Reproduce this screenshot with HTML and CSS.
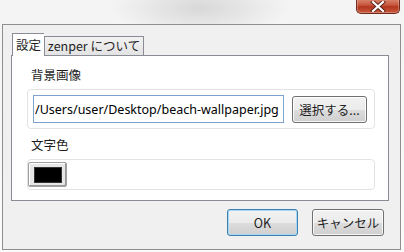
FILE: index.html
```html
<!DOCTYPE html>
<html lang="ja">
<head>
  <meta charset="UTF-8">
  <title>zenper 設定</title>
  <link rel="stylesheet" href="styles.css">
</head>
<body>

<div class="titlebar">
  <div class="close-btn">
    <svg width="16" height="11" viewBox="0 0 16 11">
      <path d="M3 1 L13 10 M13 1 L3 10" stroke="#5a2418" stroke-width="4" stroke-linecap="square"/>
      <path d="M3 1 L13 10 M13 1 L3 10" stroke="#fff" stroke-width="2.2" stroke-linecap="square"/>
    </svg>
  </div>
</div>

<div class="window">
  <div class="tabs">
    <div class="tab active">設定</div>
    <div class="tab about">zenper について</div>
  </div>

  <div class="panel">
    <div class="label">背景画像</div>
    <div class="group">
      <input type="text" class="path" value="/Users/user/Desktop/beach-wallpaper.jpg">
      <button class="btn browse">選択する...</button>
    </div>

    <div class="label">文字色</div>
    <div class="group color-group">
      <button class="swatch"><span></span></button>
    </div>
  </div>

  <div class="actions">
    <button class="btn ok">OK</button>
    <button class="btn cancel">キャンセル</button>
  </div>
</div>

</body>
</html>
```

FILE: styles.css
```css
body { margin: 0; font-family: "Noto Sans CJK JP", "Noto Sans", sans-serif; font-size: 12px; color: #1e1e1e;
  background: radial-gradient(ellipse 90px 30px at 200px 8px, #d8d8d8, rgba(230,230,230,0) 100%),
              linear-gradient(#f4f4f4, #fbfbfb); height: 252px; overflow: hidden; }

.titlebar { height: 24px; display: flex; justify-content: flex-end; padding-right: 4px; box-sizing: border-box; }
.close-btn {
  width: 44px; height: 15px; margin-top: -1px; box-sizing: border-box;
  background: linear-gradient(#d98a72, #c7533b 45%, #b3361f 55%, #c85a3d);
  border: 1px solid #6e2a1c; border-top: none; border-radius: 0 0 5px 5px;
  display: flex; align-items: center; justify-content: center;
  box-shadow: inset 0 0 0 1px rgba(255,255,255,0.25);
}

.window {
  margin: 0 3px 0 2px; height: 226px; box-sizing: border-box;
  background: #f0f0f0; border: 1px solid #8e8e8e;
  padding: 8px 0 0 8px; display: flex; flex-direction: column;
}

.tabs { display: flex; align-items: flex-end; height: 22px; padding-left: 1px; position: relative; z-index: 1; }
.tab {
  height: 19px; box-sizing: border-box; line-height: 18px; text-align: center;
  border: 1px solid #898c95; border-bottom: none; background: linear-gradient(#f2f2f2, #e3e3e3);
  font-size: 12.5px;
}
.tab.active { width: 32px; height: 23px; background: #fff; line-height: 22px; margin-bottom: -1px; border-right: none; }
.tab.about { width: 100px; }

.panel {
  width: 378px; height: 146px; box-sizing: border-box;
  background: #fff; border: 1px solid #898c95; padding: 11px 13px 0 15px;
}
.label { font-size: 12.5px; height: 22px; line-height: 16px; padding-left: 4px; }

.group {
  height: 40px; box-sizing: border-box; border: 1px solid #e3e3e3; border-radius: 4px;
  display: flex; align-items: center; padding-left: 5px; gap: 8px; margin-bottom: 8px;
}
.path {
  width: 251px; height: 28px; box-sizing: border-box; border: 1px solid #7da2ce;
  font-family: "Noto Sans", sans-serif; font-size: 12.5px; padding: 0 1px; color: #000; outline: none;
}

.btn {
  height: 27px; box-sizing: border-box; font-family: inherit; font-size: 12.5px; color: #1e1e1e;
  border: 1px solid #707070; border-radius: 3px; padding: 0;
  background: linear-gradient(#f2f2f2 0%, #ebebeb 50%, #dddddd 51%, #cfcfcf 100%);
  box-shadow: inset 0 0 0 1px rgba(255,255,255,0.8);
}
.browse { width: 75px; }

.color-group { height: 31px; padding-left: 0; margin-bottom: 0; }
.swatch { width: 39px; height: 25px; padding: 0; box-sizing: border-box; display: flex; align-items: center; justify-content: center;
  background: #e6e6e6; border: 1px solid #a0a0a0; border-radius: 2px; box-shadow: inset -1px -1px 0 #9a9a9a, inset 1px 1px 0 #fff; }
.swatch span { display: block; width: 28px; height: 16px; background: #000; border: 1px solid #333; box-sizing: border-box; }

.actions { display: flex; justify-content: flex-end; gap: 14px; padding: 8px 16px 0 0; }
.ok { width: 71px; border-color: #3c7fb1; box-shadow: inset 0 0 0 1px #a6d8f5; }
.cancel { width: 72px; }
```
